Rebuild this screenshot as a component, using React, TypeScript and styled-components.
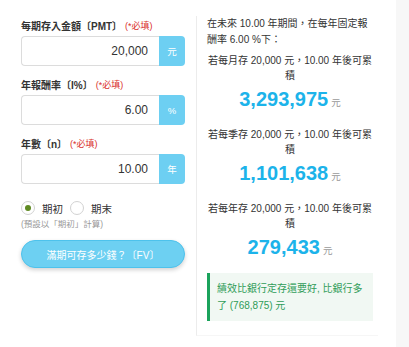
import React from 'react';
import styled, { createGlobalStyle } from 'styled-components';

const GlobalStyle = createGlobalStyle`
  html, body {
    margin: 0;
    padding: 0;
    background: #fff;
  }
  body {
    font-family: "Liberation Sans", "Noto Sans CJK TC", sans-serif;
    color: #333;
  }
`;

const Page = styled.div`
  display: flex;
  min-height: 100vh;
`;

const Main = styled.main`
  width: 396px;
  display: flex;
  align-items: flex-start;
  gap: 11px;
  padding: 16px 0 0 21px;
  box-sizing: border-box;
`;

const Side = styled.aside`
  flex: 1;
  background: #f7f7f7;
`;

const Form = styled.section`
  width: 164px;
  padding-top: 2px;
  display: flex;
  flex-direction: column;
`;

const Field = styled.div`
  margin-bottom: 11px;
`;

const Label = styled.label`
  display: flex;
  align-items: center;
  height: 14px;
  margin-bottom: 4px;
  font-size: 10px;
  font-weight: 700;
  color: #333;
`;

const Required = styled.span`
  margin-left: 3px;
  font-size: 9px;
  font-weight: 400;
  color: #d9302c;
`;

const InputGroup = styled.div`
  display: flex;
  height: 30px;
`;

const Input = styled.input`
  flex: 1;
  min-width: 0;
  box-sizing: border-box;
  border: 1px solid #dcdcdc;
  border-right: none;
  border-radius: 4px 0 0 4px;
  padding: 0 11px 0 8px;
  text-align: right;
  font-family: inherit;
  font-size: 12px;
  color: #333;
  outline: none;
`;

const Addon = styled.span`
  width: 26px;
  display: flex;
  align-items: center;
  justify-content: center;
  background: #6dcff2;
  border-radius: 0 4px 4px 0;
  color: #fff;
  font-size: 9.5px;
`;

const RadioRow = styled.div`
  display: flex;
  align-items: center;
  gap: 7px;
  height: 16px;
  margin-top: 5px;
`;

const RadioOption = styled.label`
  display: flex;
  align-items: center;
  gap: 7px;
  font-size: 10.5px;
  color: #333;
`;

const RadioDot = styled.span<{ $checked?: boolean }>`
  width: 14px;
  height: 14px;
  box-sizing: border-box;
  border: 1px solid #d2d2d2;
  border-radius: 50%;
  display: flex;
  align-items: center;
  justify-content: center;

  &::after {
    content: '';
    width: 6px;
    height: 6px;
    border-radius: 50%;
    background: ${({ $checked }) => ($checked ? '#5f8a22' : 'transparent')};
  }
`;

const Note = styled.div`
  margin-top: 2px;
  height: 12px;
  line-height: 12px;
  font-size: 8.5px;
  color: #999;
`;

const SubmitButton = styled.button`
  margin-top: 10px;
  height: 28px;
  border: 1px solid #4dc2ec;
  border-radius: 14px;
  background: #6dd0f2;
  box-shadow: 0 2px 4px rgba(0, 0, 0, 0.18);
  color: #fff;
  font-family: inherit;
  font-size: 10px;
  cursor: pointer;
`;

const Results = styled.section`
  width: 166px;
  padding: 0 5px 14px 10px;
  border-left: 1px solid #ececec;
  border-bottom: 1px solid #f6f6f6;
`;

const Intro = styled.p`
  margin: 0 0 5px;
  font-size: 10px;
  line-height: 16px;
  color: #333;
`;

const Blocks = styled.div`
  display: flex;
  flex-direction: column;
  gap: 14px;
`;

const Block = styled.div`
  text-align: center;
`;

const BlockText = styled.p`
  margin: 0;
  font-size: 10px;
  line-height: 15px;
  color: #333;
`;

const Amount = styled.div`
  margin-top: 2px;
  height: 28px;
  line-height: 28px;
  font-size: 20px;
  font-weight: 700;
  color: #1cb3ea;
`;

const Unit = styled.span`
  margin-left: 3px;
  font-size: 9.5px;
  font-weight: 400;
  color: #9a9a9a;
`;

const Alert = styled.div`
  margin-top: 12px;
  padding: 8px 8px 7px 7px;
  border-left: 3px solid #1ba35c;
  background: #f1f8f3;
  color: #2f9c58;
  font-size: 10px;
  line-height: 16.5px;
`;

const fields = [
  { label: '每期存入金額〔PMT〕', value: '20,000', unit: '元' },
  { label: '年報酬率〔I%〕', value: '6.00', unit: '%' },
  { label: '年數〔n〕', value: '10.00', unit: '年' },
];

const results = [
  { period: '月', amount: '3,293,975' },
  { period: '季', amount: '1,101,638' },
  { period: '年', amount: '279,433' },
];

export default function App() {
  return (
    <>
      <GlobalStyle />
      <Page>
        <Main>
          <Form>
            {fields.map((f) => (
              <Field key={f.label}>
                <Label>
                  {f.label}
                  <Required>(*必填)</Required>
                </Label>
                <InputGroup>
                  <Input defaultValue={f.value} />
                  <Addon>{f.unit}</Addon>
                </InputGroup>
              </Field>
            ))}

            <RadioRow>
              <RadioOption>
                <RadioDot $checked />
                期初
              </RadioOption>
              <RadioOption>
                <RadioDot />
                期末
              </RadioOption>
            </RadioRow>
            <Note>(預設以「期初」計算)</Note>

            <SubmitButton>滿期可存多少錢？〔FV〕</SubmitButton>
          </Form>

          <Results>
            <Intro>在未來 10.00 年期間，在每年固定報酬率 6.00 %下：</Intro>
            <Blocks>
              {results.map((r) => (
                <Block key={r.period}>
                  <BlockText>
                    若每{r.period}存 20,000 元，10.00 年後可累積
                  </BlockText>
                  <Amount>
                    {r.amount}
                    <Unit>元</Unit>
                  </Amount>
                </Block>
              ))}
            </Blocks>
            <Alert>績效比銀行定存還要好, 比銀行多了 (768,875) 元</Alert>
          </Results>
        </Main>
        <Side />
      </Page>
    </>
  );
}
